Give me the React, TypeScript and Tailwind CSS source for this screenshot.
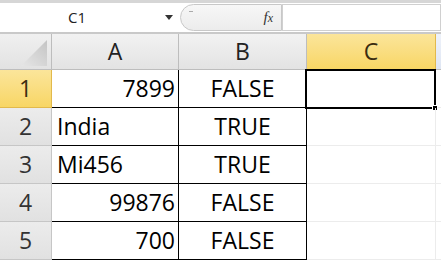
import React from 'react'

const ROWS: { n: number; a: string; aRight: boolean; b: string }[] = [
  { n: 1, a: '7899', aRight: true, b: 'FALSE' },
  { n: 2, a: 'India', aRight: false, b: 'TRUE' },
  { n: 3, a: 'Mi456', aRight: false, b: 'TRUE' },
  { n: 4, a: '99876', aRight: true, b: 'FALSE' },
  { n: 5, a: '700', aRight: true, b: 'FALSE' },
]

const font = { fontFamily: '"Open Sans", "Liberation Sans", sans-serif' }

export default function App() {
  return (
    <div className="w-[441px] h-[263px] overflow-hidden bg-white text-black" style={font}>
      {/* formula bar */}
      <div className="h-[34px] border-t-[3px] border-[#d6d6d6] border-b-2 border-b-[#c9c9c9] flex bg-white">
        <div className="w-[180px] flex items-center relative">
          <span className="ml-[68px] text-[15px] text-[#222]">C1</span>
          <span className="absolute left-[165px] top-[12px] w-0 h-0 border-l-[4px] border-r-[4px] border-t-[5px] border-l-transparent border-r-transparent border-t-[#333]" />
        </div>
        <div className="w-[102px] my-[1px] rounded-l-[14px] border border-[#c8c8c8] bg-gradient-to-b from-[#f7f7f7] to-[#ececec] flex items-center justify-end pr-[8px] relative">
          <span className="absolute left-[8px] top-[6px] w-[4px] h-[1px] bg-[#aaa]" />
          <span className="italic text-[15px] text-[#333]" style={{ fontFamily: '"Liberation Serif", serif' }}>
            f<span className="text-[12px]">x</span>
          </span>
        </div>
        <div className="flex-1 border border-[#d0d0d0] my-[1px] bg-white" />
      </div>

      {/* column headers */}
      <div className="grid grid-cols-[52px_127px_128px_129px_1fr] h-[36px]">
        <div className="border-r border-b border-[#bdbdbd] bg-gradient-to-b from-[#f0f0f0] to-[#e2e2e2] relative overflow-hidden">
          <svg className="absolute right-[4px] bottom-[3px]" width="26" height="26">
            <defs>
              <linearGradient id="tri" x1="0" y1="1" x2="1" y2="0">
                <stop offset="0" stopColor="#e6e6e6" />
                <stop offset="1" stopColor="#c4c4c4" />
              </linearGradient>
            </defs>
            <polygon points="26,0 26,26 0,26" fill="url(#tri)" />
          </svg>
        </div>
        <div className="border-r border-b border-[#bdbdbd] bg-gradient-to-b from-[#f2f2f2] to-[#e3e3e3] flex items-center justify-center text-[23px] text-[#222]">A</div>
        <div className="border-r border-b border-[#bdbdbd] bg-gradient-to-b from-[#f2f2f2] to-[#e3e3e3] flex items-center justify-center text-[23px] text-[#222]">B</div>
        <div className="border-r border-b border-[#e2b94c] bg-gradient-to-b from-[#fbe59a] to-[#f8d664] flex items-center justify-center text-[23px] text-[#3a2c10]">C</div>
        <div className="border-b border-[#bdbdbd] bg-gradient-to-b from-[#eef2fa] to-[#dfe6f3]" />
      </div>

      {/* rows */}
      {ROWS.map((r) => (
        <div key={r.n} className="grid grid-cols-[52px_127px_128px_129px_1fr] h-[38px]">
          <div
            className={`border-r border-b flex items-center justify-center text-[23px] ${
              r.n === 1
                ? 'bg-gradient-to-b from-[#fbe59a] to-[#f8d664] border-[#e2b94c] text-[#3a2c10]'
                : 'bg-gradient-to-b from-[#ececec] to-[#e1e1e1] border-[#c6c6c6] text-[#333]'
            }`}
          >
            {r.n}
          </div>
          <div className={`border-r border-b border-black flex items-center text-[23px] ${r.aRight ? 'justify-end pr-[3px]' : 'pl-[5px]'}`}>
            {r.a}
          </div>
          <div className="border-r border-b border-black flex items-center justify-center text-[23px]">{r.b}</div>
          <div className="border-r border-b border-[#ececec] relative">
            {r.n === 1 && (
              <div className="absolute -left-[2px] -top-[1px] -right-[1px] -bottom-[2px] border-2 border-black">
                <span className="absolute -right-[4px] -bottom-[4px] w-[6px] h-[6px] bg-black border border-white" />
              </div>
            )}
          </div>
          <div className="border-b border-[#ececec]" />
        </div>
      ))}
    </div>
  )
}
